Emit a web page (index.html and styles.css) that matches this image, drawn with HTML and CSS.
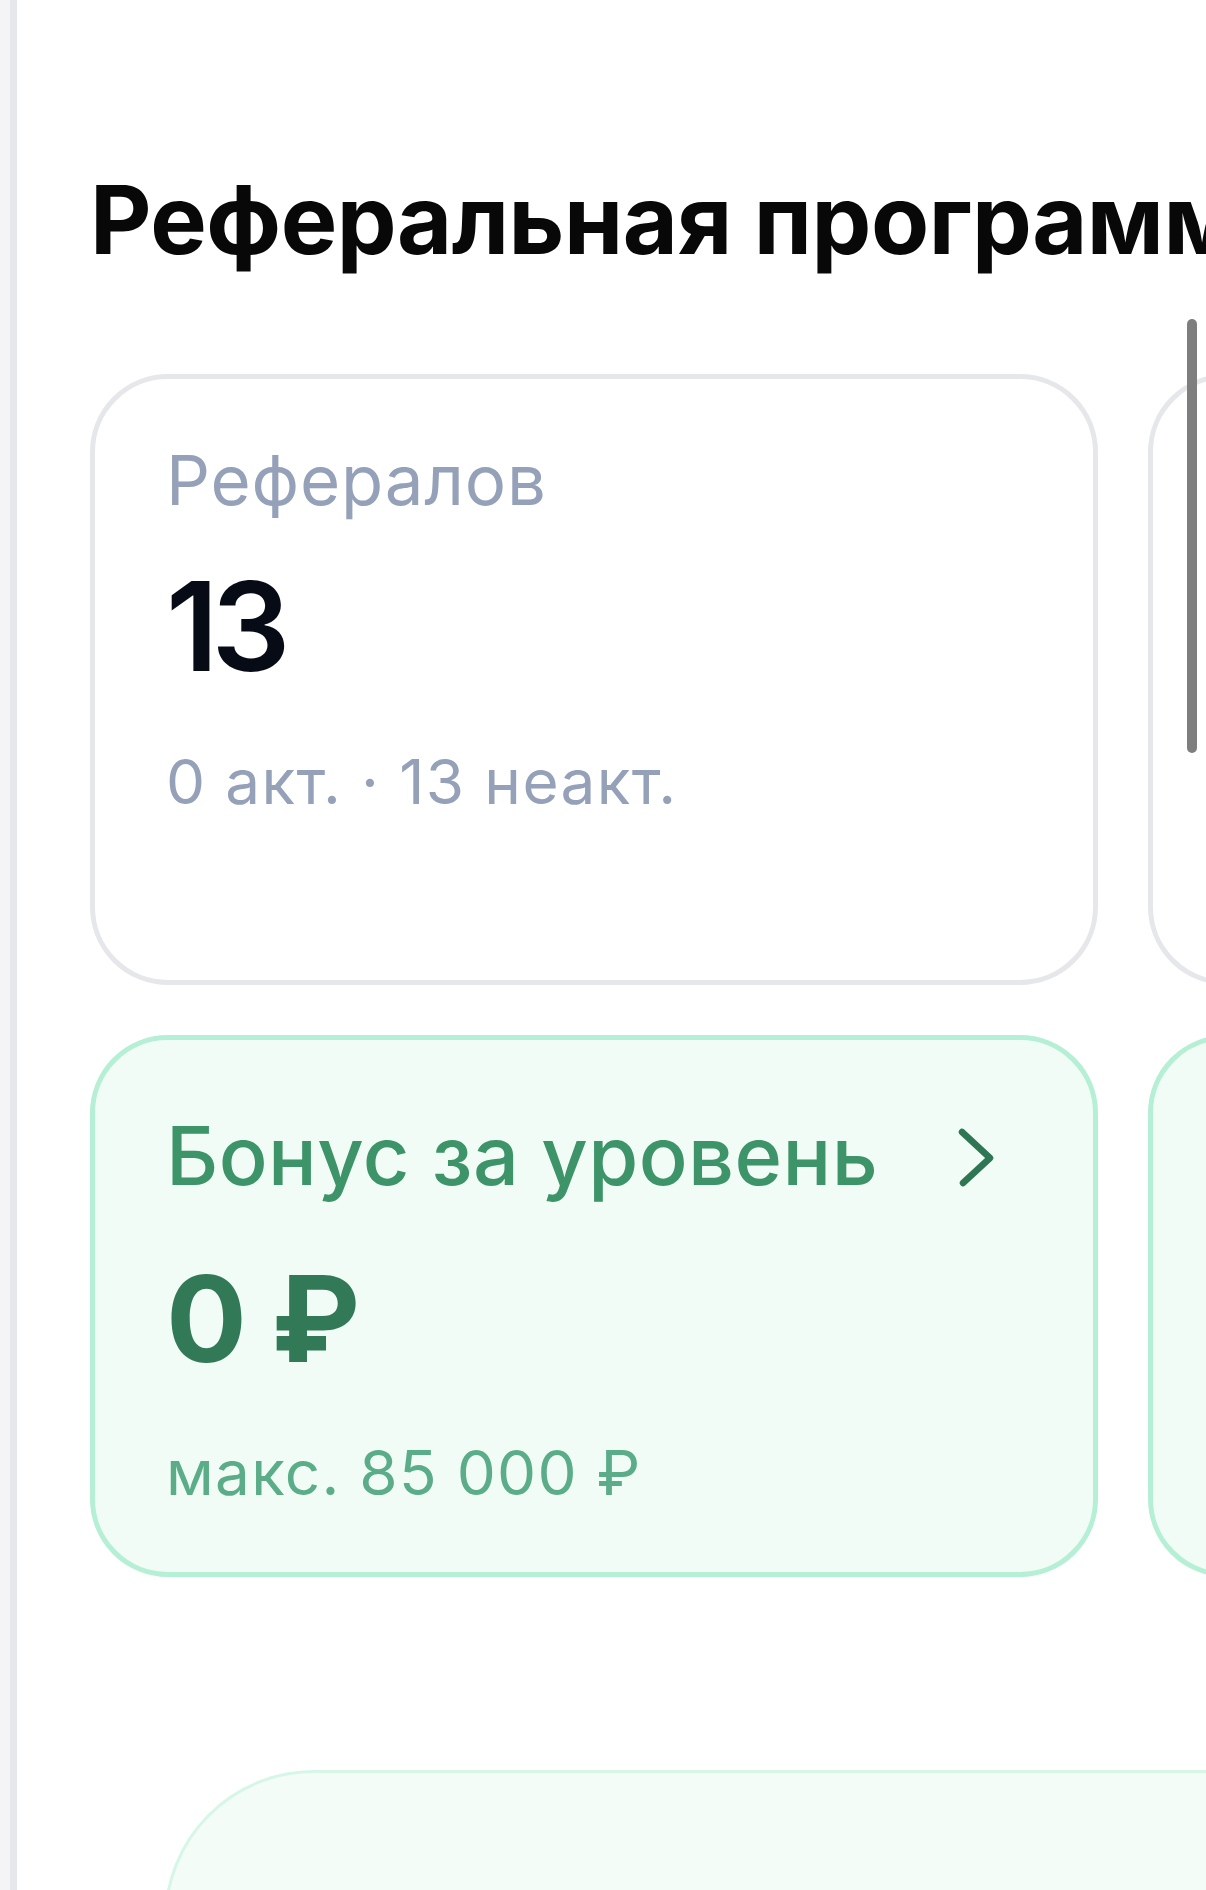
FILE: index.html
```html
<!DOCTYPE html>
<html lang="ru">
<head>
<meta charset="utf-8">
<title>Реферальная программа</title>
<link rel="stylesheet" href="styles.css">
</head>
<body>
<div class="app">
  <h1 class="page-title">Реферальная программа</h1>
  <div class="cards">
    <section class="card card-stat">
      <div class="card-label">Рефералов</div>
      <div class="card-value">13</div>
      <div class="card-sub">0 акт. · 13 неакт.</div>
    </section>
    <section class="card card-stat"></section>
    <section class="card card-bonus">
      <div class="bonus-head">
        <span class="bonus-label">Бонус за уровень</span>
        <svg class="chevron" width="40" height="60" viewBox="0 0 40 60" aria-hidden="true">
          <path d="M6 5 L34 31 L7 56" fill="none" stroke="#2f7654" stroke-width="6.5" stroke-linecap="round" stroke-linejoin="round"/>
        </svg>
      </div>
      <div class="bonus-value">0 ₽</div>
      <div class="bonus-sub">макс. 85 000 ₽</div>
    </section>
    <section class="card card-bonus"></section>
  </div>
  <div class="promo"></div>
  <div class="scroll-thumb"></div>
</div>
</body>
</html>
```

FILE: styles.css
```css
html, body {
  margin: 0;
  padding: 0;
  overflow: hidden;
}

body {
  background: #f4f4f6;
  font-family: "Inter", "Noto Sans", "Liberation Sans", sans-serif;
}

.app {
  position: relative;
  box-sizing: border-box;
  margin-left: 10px;
  border-left: 7px solid #e6e7ea;
  background: #ffffff;
  height: 1890px;
  overflow: hidden;
  padding: 163px 0 0 73px;
}

.page-title {
  margin: 0;
  font-size: 95px;
  line-height: 114px;
  font-weight: 700;
  color: #080808;
  white-space: nowrap;
  letter-spacing: -0.5px;
}

.cards {
  margin-top: 97px;
  display: grid;
  grid-template-columns: 1008px 1008px;
  column-gap: 50px;
  row-gap: 50px;
}

.card {
  box-sizing: border-box;
  border-radius: 78px;
  padding: 0 71px;
}

.card-stat {
  min-height: 611px;
  border: 5px solid #e5e7eb;
  background: #ffffff;
  padding-top: 60px;
}

.card-label {
  font-size: 69px;
  line-height: 83px;
  color: #95a1b8;
  letter-spacing: 0.8px;
  white-space: nowrap;
}

.card-value {
  margin-top: 30px;
  font-size: 124px;
  line-height: 149px;
  font-weight: 600;
  color: #070b16;
  letter-spacing: -7px;
}

.card-sub {
  margin-top: 44px;
  font-size: 62px;
  line-height: 74px;
  color: #95a1b8;
  letter-spacing: 1.4px;
  white-space: nowrap;
}

.card-bonus {
  border: 5px solid #b5efd5;
  background: #f1fcf6;
  padding-top: 68px;
  padding-bottom: 62px;
}

.bonus-head {
  display: flex;
  align-items: center;
  justify-content: space-between;
}

.bonus-label {
  font-size: 81px;
  line-height: 97px;
  font-weight: 500;
  color: #3d9469;
  letter-spacing: 0.4px;
  white-space: nowrap;
}

.chevron {
  flex: none;
  margin-right: 26px;
}

.bonus-value {
  margin-top: 42px;
  font-size: 120px;
  line-height: 144px;
  font-weight: 650;
  color: #327a57;
  letter-spacing: -2px;
}

.bonus-sub {
  margin-top: 45px;
  font-size: 62px;
  line-height: 74px;
  color: #5aad88;
  letter-spacing: 1.3px;
  white-space: nowrap;
}

.promo {
  margin-top: 193px;
  margin-left: 74px;
  width: 1200px;
  height: 400px;
  box-sizing: border-box;
  border: 3px solid #d6f6e7;
  border-radius: 150px;
  background: #f3fcf7;
}

.scroll-thumb {
  position: absolute;
  left: 1170px;
  top: 319px;
  width: 10px;
  height: 434px;
  border-radius: 5px;
  background: #7e7e7e;
}
```
